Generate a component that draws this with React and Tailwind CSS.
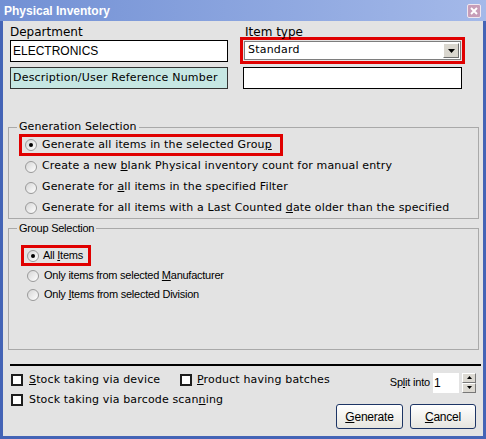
import React from "react";

const VERDANA = "font-['DejaVu_Sans',Verdana,sans-serif]";
const TAHOMA = "font-['Liberation_Sans',Arial,sans-serif]";

function U({ children }) {
  return <span className="underline underline-offset-[1px] decoration-1">{children}</span>;
}

function Radio({ checked }) {
  return (
    <span className="shrink-0 w-[12px] h-[12px] rounded-full border border-[#9a9a9a] bg-gradient-to-br from-[#d6d6d6] to-white flex items-center justify-center">
      {checked && <span className="w-[4px] h-[4px] rounded-full bg-black" />}
    </span>
  );
}

function Check() {
  return <span className="shrink-0 w-[12px] h-[12px] border-2 border-[#1e1e1e] bg-white" />;
}

function Tri({ up, size = 3 }) {
  return (
    <svg width={size * 2 + 1} height={size + 1} viewBox={`0 0 ${size * 2 + 1} ${size + 1}`}>
      <polygon
        points={up ? `0,${size + 1} ${size * 2 + 1},${size + 1} ${size + 0.5},0` : `0,0 ${size * 2 + 1},0 ${size + 0.5},${size + 1}`}
        fill="#000"
      />
    </svg>
  );
}

const GEN = [
  <>Create a new <U>b</U>lank Physical inventory count for manual entry</>,
  <>Generate for <U>a</U>ll items in the specified Filter</>,
  <>Generate for all items with a Last Counted <U>d</U>ate older than the specified</>,
];

export default function App() {
  return (
    <div className={`w-[486px] h-[439px] flex flex-col text-black ${VERDANA}`}>
      {/* title bar */}
      <div className="h-[21px] shrink-0 flex items-center justify-between pl-[4px] pr-[5px] bg-gradient-to-r from-[#7290d4] to-[#a4b9e9]">
        <span className={`text-white font-bold text-[12px] ${TAHOMA}`}>Physical Inventory</span>
        <span className="w-[14px] h-[14px] rounded-[2px] border border-[#efe6ef] bg-[#c79db8] flex items-center justify-center">
          <svg width="8" height="8" viewBox="0 0 8 8">
            <path d="M1 1 L7 7 M7 1 L1 7" stroke="#fff" strokeWidth="1.9" />
          </svg>
        </span>
      </div>

      <div className="flex-1 flex flex-col bg-[#e3e3e3] border-x-[3px] border-b-[3px] border-[#4464b6] pl-[5px] pr-[4px]">
        {/* top fields */}
        <div className="flex mt-[4px] ml-[2px]">
          <div className="w-[218px]">
            <div className="text-[12px] leading-[14px]">Department</div>
            <div className={`mt-[1px] h-[22px] border border-black bg-white px-[2px] flex items-center text-[12px] ${TAHOMA}`}>ELECTRONICS</div>
            <div className="mt-[5px] h-[22px] border border-[#333] bg-[#c6e7e3] px-[2px] flex items-center text-[11px] tracking-[0.2px]">
              Description/User Reference Number
            </div>
          </div>
          <div className="ml-[12px] w-[225px]">
            <div className="pl-[5px] text-[12px] leading-[14px] h-[12px]">Item type</div>
            <div className="h-[27px] border-[3px] border-[#e00000] p-[1px]">
              <div className="h-full border border-[#7e7e7e] bg-white flex items-center justify-between pl-[3px] pr-[1px]">
                <span className="text-[11px] tracking-[0.2px]">Standard</span>
                <span className="w-[16px] h-[15px] bg-[#d9d6ce] border border-t-white border-l-white border-r-[#6f6f6f] border-b-[#6f6f6f] flex items-center justify-center">
                  <Tri />
                </span>
              </div>
            </div>
            <div className="mt-[3px] ml-[3px] w-[219px] h-[22px] border border-black bg-white" />
          </div>
        </div>

        {/* generation selection */}
        <fieldset className="mt-[31px] border border-[#a9a9a9] p-0">
          <legend className="ml-[8px] px-[2px] text-[11px] leading-[14px] tracking-[0.1px]">Generation Selection</legend>
          <div className="ml-[10px] w-[264px] h-[22px] border-[3px] border-[#e00000] flex items-center pl-[3px] gap-[5px] text-[11px] tracking-[0.15px] whitespace-nowrap">
            <Radio checked />
            <span>Generate all items in the selected Grou<U>p</U></span>
          </div>
          {GEN.map((t, i) => (
            <div key={i} className={`${i === 2 ? "h-[20px]" : "h-[21px]"} flex items-center pl-[16px] gap-[5px] text-[11px] tracking-[0.15px] whitespace-nowrap`}>
              <Radio />
              <span>{t}</span>
            </div>
          ))}
        </fieldset>

        {/* group selection */}
        <fieldset className={`mt-[2px] h-[129px] border border-[#a9a9a9] p-0 ${TAHOMA}`}>
          <legend className="ml-[8px] px-[2px] text-[11px] leading-[14px] tracking-[-0.25px]">Group Selection</legend>
          <div className="mt-[10px] ml-[12px] w-[70px] h-[21px] border-[3px] border-[#e00000] flex items-center pl-[3px] gap-[4px] text-[11px] tracking-[-0.25px] whitespace-nowrap">
            <Radio checked />
            <span>All <U>I</U>tems</span>
          </div>
          <div className="h-[19px] flex items-center pl-[18px] gap-[5px] text-[11px] tracking-[-0.25px] whitespace-nowrap">
            <Radio />
            <span>Only items from selected <U>M</U>anufacturer</span>
          </div>
          <div className="h-[19px] flex items-center pl-[18px] gap-[5px] text-[11px] tracking-[-0.25px] whitespace-nowrap">
            <Radio />
            <span>Only <U>I</U>tems from selected Division</span>
          </div>
        </fieldset>

        <div className="mt-[14px] ml-[2px] -mr-[2px] h-[2px] bg-black" />

        {/* bottom */}
        <div className="flex mt-[6px]">
          <div className="ml-[3px] text-[11px] tracking-[0.15px] whitespace-nowrap">
            <div className="h-[16px] flex items-center">
              <div className="w-[169px] flex items-center gap-[6px]">
                <Check />
                <span><U>S</U>tock taking via device</span>
              </div>
              <div className="flex items-center gap-[5px]">
                <Check />
                <span><U>P</U>roduct having batches</span>
              </div>
            </div>
            <div className="mt-[4px] h-[16px] flex items-center gap-[6px]">
              <Check />
              <span>Stock taking via barcode scan<U>n</U>ing</span>
            </div>
          </div>

          <div className={`ml-auto mr-[3px] flex flex-col items-end ${TAHOMA}`}>
            <div className="h-[21px] flex items-center">
              <span className="text-[11px] tracking-[-0.2px]">Sp<U>l</U>it into</span>
              <span className="ml-[3px] w-[26px] h-[20px] bg-white text-[12px] flex items-center pl-[1px]">1</span>
              <div className="ml-[3px] w-[14px] h-[20px] flex flex-col">
                <span className="flex-1 bg-[#dcd9d2] border border-t-white border-l-white border-r-[#777] border-b-[#777] flex items-center justify-center">
                  <Tri up size={2} />
                </span>
                <span className="flex-1 bg-[#dcd9d2] border border-t-white border-l-white border-r-[#777] border-b-[#777] flex items-center justify-center">
                  <Tri size={2} />
                </span>
              </div>
            </div>
            <div className="mt-[11px] flex gap-[7px] text-[12px] tracking-[-0.2px]">
              <button className="w-[67px] h-[25px] rounded-[3px] border border-[#1d3565] bg-gradient-to-b from-white to-[#e6e5df] flex items-center justify-center">
                <span><U>G</U>enerate</span>
              </button>
              <button className="w-[66px] h-[25px] rounded-[3px] border border-[#1d3565] bg-gradient-to-b from-white to-[#e6e5df] flex items-center justify-center">
                <span><U>C</U>ancel</span>
              </button>
            </div>
          </div>
        </div>
      </div>
    </div>
  );
}
